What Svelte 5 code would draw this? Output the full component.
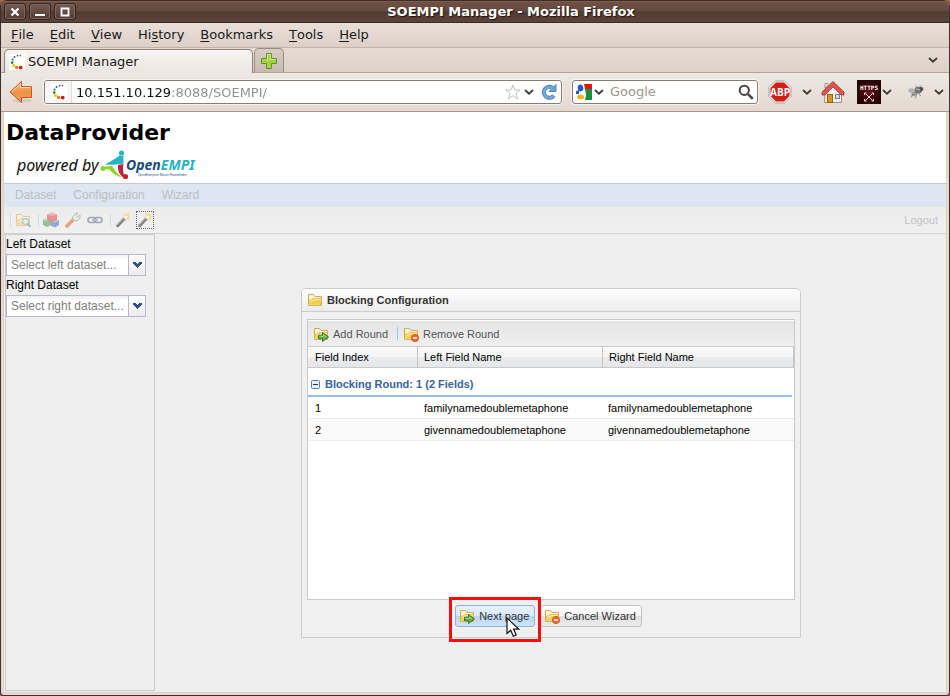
<script>
  const menus = [['', 'F', 'ile'], ['', 'E', 'dit'], ['', 'V', 'iew'], ['Hi', 's', 'tory'], ['', 'B', 'ookmarks'], ['', 'T', 'ools'], ['', 'H', 'elp']];
  const rows = [
    { index: 1, left: 'familynamedoublemetaphone', right: 'familynamedoublemetaphone' },
    { index: 2, left: 'givennamedoublemetaphone', right: 'givennamedoublemetaphone' }
  ];
  let url = $state('10.151.10.129:8088/SOEMPI/');
</script>

{#snippet chevron()}
  <svg class="chevron" width="12" height="8" viewBox="0 0 12 8" aria-hidden="true"><path d="M2 2l4 3.6L10 2" fill="none" stroke="#403c38" stroke-width="1.9" /></svg>
{/snippet}

{#snippet favicon()}
  <svg width="16" height="16" viewBox="0 0 16 16" aria-hidden="true">
    <rect width="16" height="16" fill="#fff" />
    <circle cx="11.5" cy="1.6" r=".8" fill="#8a3c96" /><circle cx="8.6" cy="1.7" r=".9" fill="#5a4a98" /><circle cx="5.5" cy="3" r="1" fill="#3c5a9c" />
    <circle cx="3.6" cy="5.6" r="1.1" fill="#2f7a78" /><circle cx="3.2" cy="8.6" r="1.3" fill="#1c7c30" /><circle cx="4.6" cy="11.4" r="1.5" fill="#f5c400" />
    <circle cx="7.6" cy="13.4" r="1.6" fill="#e07a10" /><circle cx="11.7" cy="13.6" r="1.9" fill="#cc1414" />
  </svg>
{/snippet}

{#snippet folder(kind)}
  <svg width="16" height="16" viewBox="0 0 16 16" aria-hidden="true">
    <path d="M1.500 13.500V2.500h5l1.500 2h6.500v9z" fill="#fdf3c8" stroke="#d9a54e" />
    <path d="M3 4h3M8.500 6h5" stroke="#fff" />
    <path d="M1.500 13.500h12l1-7H6l-1 1.500H2.500z" fill="#f9dc80" stroke="#e0b057" stroke-width=".8" />
    <path d="M3 12.500l.6-3.500h3L7.500 7.500h6l-.8 5z" fill="#f4cf58" />
    <path d="M3.500 9h3l1-1.500h6" fill="none" stroke="#fff3bd" stroke-width=".8" />
    {#if kind === 'add'}
      <path d="M5.500 9.200h4v-2.700l6 4.500-6 4.500v-2.700h-4z" fill="#64ae4b" stroke="#347a2d" />
      <path d="M6.500 10.300h4V9l2.500 2" fill="none" stroke="#b5e39b" stroke-width=".8" />
    {:else if kind === 'remove'}
      <circle cx="12" cy="12" r="3.600" fill="#f16a26" stroke="#c64a14" stroke-width=".8" /><path d="M9.800 12h4.400" stroke="#fff" stroke-width="1.500" />
    {:else if kind === 'search'}
      <circle cx="10.500" cy="9.500" r="3" fill="#d4ecff" stroke="#4c83bd" /><path d="M12.600 11.800l3 3.200" stroke="#3f77b5" stroke-width="1.700" />
    {/if}
  </svg>
{/snippet}

{#snippet wand()}
  <svg width="16" height="16" viewBox="0 0 16 16" aria-hidden="true">
    <path d="M11 0l.8 2.500L14.500 1l-1 2.700 2.500.8-2.500.8 1 2.700-2.700-1-.8 2-.8-2.500-3-.5 2.300-1.500L8 1l2.500 1.500z" fill="#f5c918" />
    <path d="M1.800 14.600L10 6" stroke="#1c1a18" stroke-width="3" /><path d="M1.600 13.500L9.800 5" stroke="#8c8780" stroke-width=".8" />
    <path d="M9.300 6.700L12 4" stroke="#fff" stroke-width="2.600" />
  </svg>
{/snippet}

{#snippet combo(id, label, hint)}
  <div class="field">
    <label for={id}>{label}</label>
    <div class="combo">
      <input {id} type="text" placeholder={hint} />
      <button type="button" aria-label={'Open ' + label}>
        <svg width="9" height="6" viewBox="0 0 9 6" shape-rendering="crispEdges" aria-hidden="true"><path d="M0 0h3v1h1v1h1V1h1V0h3v2H8v1H7v1H6v1H5v1H4V5H3V4H2V3H1V2H0z" fill="#304f8c" /></svg>
      </button>
    </div>
  </div>
{/snippet}

<div class="desktop">
  <div class="window">
    <header class="titlebar">
      <div class="controls">
        <button aria-label="Close"><svg width="10" height="10" viewBox="0 0 10 10"><path d="M1.500 1.500l7 7M8.500 1.500l-7 7" stroke="#fff" stroke-width="2.200" /></svg></button>
        <button aria-label="Minimize"><svg width="10" height="10" viewBox="0 0 10 10"><path d="M0 8h10" stroke="#fff" stroke-width="2" /></svg></button>
        <button aria-label="Maximize"><svg width="10" height="10" viewBox="0 0 10 10"><path d="M1.500 1.500h7v7h-7z" fill="none" stroke="#fff" stroke-width="1.800" /></svg></button>
      </div>
      <span class="caption">SOEMPI Manager - Mozilla Firefox</span>
    </header>

    <nav class="menubar">
      {#each menus as [before, key, after]}
        <button>{before}<u>{key}</u>{after}</button>
      {/each}
    </nav>

    <div class="tabs">
      <button class="tab">{@render favicon()}<span>SOEMPI Manager</span></button>
      <button class="newtab" aria-label="New tab">
        <svg width="18" height="18" viewBox="0 0 18 18"><path d="M6.500 1.500h5v5h5v5h-5v5h-5v-5h-5v-5h5z" fill="#a8cf45" stroke="#5b9424" /><path d="M7.500 9V2.500h3v5h5" fill="none" stroke="#d6eb91" /></svg>
      </button>
      <button class="alltabs" aria-label="List all tabs">{@render chevron()}</button>
    </div>

    <div class="navbar">
      <button class="back" aria-label="Back">
        <svg width="24" height="24" viewBox="0 0 24 24">
          <defs><linearGradient id="arrow" x2="0" y2="1"><stop offset="0" stop-color="#f8c48a" /><stop offset=".5" stop-color="#ec9248" /><stop offset="1" stop-color="#f3a05a" /></linearGradient></defs>
          <ellipse cx="13" cy="20.500" rx="10" ry="2" fill="#cdbfb3" opacity=".6" />
          <path d="M1 12L12.500 1.500V6.500h10v11h-10v5z" fill="url(#arrow)" stroke="#d4541c" stroke-linejoin="round" />
          <path d="M3 11.600L11.500 4v3.500h10" fill="none" stroke="#fbd9b4" />
        </svg>
      </button>
      <div class="box url">
        <span class="identity">{@render favicon()}</span>
        <input type="text" aria-label="Address" bind:value={url} />
        <button aria-label="Bookmark this page"><svg width="16" height="16" viewBox="0 0 16 16"><path d="M8 1l2 5h5.200l-4.200 3.300 1.600 5.500L8 11.600l-4.600 3.200L5 9.300.8 6H6z" fill="#fff" stroke="#c4c2c0" /></svg></button>
        <button aria-label="Show history">{@render chevron()}</button>
        <button class="reload" aria-label="Reload"><svg width="16" height="16" viewBox="0 0 16 16"><path d="M12.800 11.500A5.500 5.500 0 1 1 11.800 4" fill="none" stroke="#4f86bd" stroke-width="4" /><path d="M15 .5v7H8z" fill="#6ba3d8" stroke="#4f86bd" /><path d="M12.500 11.500A5.300 5.300 0 1 1 11.500 4.200" fill="none" stroke="#75abdc" stroke-width="2.200" /></svg></button>
      </div>
      <div class="box search">
        <svg width="16" height="16" viewBox="0 0 16 16" aria-hidden="true">
          <rect width="16" height="16" fill="#fff" /><path d="M8 0h8v5H9z" fill="#e5120e" /><path d="M9 5h7v11H9l1-5z" fill="#139240" /><path d="M0 7l3-1v4H0z" fill="#2858c4" />
          <ellipse cx="4.500" cy="4" rx="2.800" ry="3.500" fill="#2858c4" transform="rotate(-12 4.500 4)" /><path d="M5 7.500c4 1 5 4 3 7" fill="none" stroke="#fff" stroke-width="1.500" /><ellipse cx="4.500" cy="13" rx="3.500" ry="2.500" fill="#f3b51b" />
        </svg>
        <button aria-label="Choose search engine">{@render chevron()}</button>
        <input type="text" aria-label="Search" placeholder="Google" />
        <button aria-label="Search"><svg width="16" height="16" viewBox="0 0 16 16"><circle cx="6.300" cy="6.300" r="4.600" fill="none" stroke="#4a4744" stroke-width="2" /><path d="M9.800 9.800l5 5" stroke="#4a4744" stroke-width="2.600" /></svg></button>
      </div>
      <div class="addons">
        <button aria-label="Adblock Plus">
          <svg width="24" height="24" viewBox="0 0 24 24"><path d="M7.500 1h9L23 7.500v9L16.500 23h-9L1 16.500v-9z" fill="#f5f3f2" stroke="#a9a29e" /><path d="M8 2.500h8L21.500 8v8L16 21.500H8L2.500 16V8z" fill="#d31d17" /><text x="12" y="16" text-anchor="middle" font-family="'Open Sans', sans-serif" font-size="10" font-weight="bold" fill="#fff">ABP</text></svg>
        </button>
        <button class="abpmenu" aria-label="Adblock menu">{@render chevron()}</button>
        <button class="home" aria-label="Home">
          <svg width="24" height="24" viewBox="0 0 24 24"><path d="M4 12L12 5l8.500 7v10.500H3.500z" fill="#f1efec" stroke="#98938d" /><path d="M4 8V3.500h3V6z" fill="#eee" stroke="#99918b" /><path d="M1 12L12 1.500 23 12v3h-3l-8-8-8 8H1z" fill="#d95653" stroke="#a83434" stroke-width=".8" /><rect x="6.500" y="14.500" width="5" height="8" fill="#d99124" stroke="#9a5f12" /><rect x="14.500" y="14.500" width="4" height="4" fill="#cfe0e8" stroke="#73808a" /></svg>
        </button>
        <button aria-label="HTTPS Everywhere">
          <svg width="24" height="24" viewBox="0 0 24 24"><defs><radialGradient id="dark"><stop offset="0" stop-color="#670d10" /><stop offset="1" stop-color="#250406" /></radialGradient></defs><rect width="24" height="24" fill="url(#dark)" /><text x="12" y="10" text-anchor="middle" font-family="'DejaVu Sans Mono', monospace" font-size="6" font-weight="bold" fill="#fff">HTTPS</text><path d="M8.500 13.500l7 7M15.500 13.500l-7 7M7.500 15v-2h2M14.500 13h2v2M7.500 19v2h2M14.500 21h2v-2" fill="none" stroke="#f4dada" /></svg>
        </button>
        <button aria-label="HTTPS menu">{@render chevron()}</button>
        <button class="fly" aria-label="Firebug">
          <svg width="16" height="14" viewBox="0 0 16 14"><ellipse cx="5" cy="6" rx="4.800" ry="2.400" fill="#b4b3b1" transform="rotate(12 5 6)" /><ellipse cx="7" cy="8.500" rx="4" ry="1.900" fill="#989795" transform="rotate(-30 7 8.500)" /><ellipse cx="10.500" cy="5" rx="3.800" ry="3.300" fill="#737271" /><circle cx="13.500" cy="4" r="1.900" fill="#4f4e4e" /><path d="M5 9l-2 3.500M8.500 9l-1 4.500M11 8l1.500 3M9 2L7.500.5M12 2l1-1.500" stroke="#7b7a79" stroke-width=".8" /><path d="M8 4l4 1" stroke="#c6c5c3" /></svg>
        </button>
        <button class="last" aria-label="Firebug menu">{@render chevron()}</button>
      </div>
    </div>

    <main>
      <section class="banner">
        <h1>DataProvider</h1>
        <div class="brand">
          <span>powered by</span>
          <svg width="98" height="30" viewBox="0 0 98 30" role="img" aria-label="OpenEMPI">
            <circle cx="21.500" cy="3" r="2.600" fill="#28b4c4" /><path d="M5 14.500Q15 9 19.500 5.500q2 .5 4 .5v7.500Q14 15.500 5 14.500z" fill="#28b4c4" />
            <circle cx="3" cy="18.500" r="2.500" fill="#8fd424" /><path d="M5 16.500l7-.5q4 7 10 11.500-9-2.500-12.500-8l-4.500-.5z" fill="#8fd424" />
            <circle cx="25.500" cy="26.500" r="2.600" fill="#c51f3c" /><path d="M18 15l5.500-1q-1.500 6 1 12l-2 1q-5.500-5-4.500-12z" fill="#c51f3c" />
            <text x="26" y="20" font-family="'Noto Sans', sans-serif" font-size="14" font-weight="bold" font-style="italic"><tspan fill="#164a7a">Open</tspan><tspan fill="#25b3c4">EMPI</tspan></text>
            <text x="38" y="26" font-family="'Liberation Sans', sans-serif" font-size="3" fill="#164a7a">OpenEnterprise Master PatientIndex</text>
          </svg>
        </div>
      </section>
      <nav class="appmenu"><button disabled>Dataset</button><button disabled>Configuration</button><button disabled>Wizard</button></nav>
      <div class="toolbar">
        <i class="sep"></i>
        <button disabled aria-label="Browse">{@render folder('search')}</button>
        <i class="sep"></i>
        <button disabled aria-label="Blocks"><svg width="16" height="16" viewBox="0 0 16 16"><path d="M0 8l4-1.500L8 8v5l-4 2-4-2z" fill="#3c8f46" /><path d="M0 8l4-1.500L8 8l-4 1.500z" fill="#92cb91" /><path d="M8 9l4-2 4 1.500V13l-4 2.500L8 14z" fill="#3568b8" /><path d="M8 9l4-2 4 1.500-4 2z" fill="#94b4e2" /><path d="M4 2.500L9 .5l5 2v6l-5 2-5-2z" fill="#d43c38" /><path d="M4 2.500L9 4l5-1.500L9 .5z" fill="#f08780" /></svg></button>
        <button disabled aria-label="Settings"><svg width="16" height="16" viewBox="0 0 16 16"><path d="M2 14L8.500 7.500" stroke="#dd5a20" stroke-width="3.600" stroke-linecap="round" /><path d="M8 8L7.500 4.500 11 1l2 .2L11 3.500l1.500 1.500L15 3v3l-3 3-2.500-.3z" fill="#e4e4e2" stroke="#77736f" stroke-width=".8" /></svg></button>
        <button disabled aria-label="Link"><svg width="16" height="16" viewBox="0 0 16 16"><rect x="1" y="5.500" width="8" height="5" rx="2.500" fill="none" stroke="#53627c" stroke-width="1.600" /><rect x="7" y="5.500" width="8" height="5" rx="2.500" fill="none" stroke="#53627c" stroke-width="1.600" /><path d="M5 8h6" stroke="#8591a8" stroke-width="1.500" /></svg></button>
        <i class="sep"></i>
        <button disabled aria-label="Wizard">{@render wand()}</button>
        <button disabled class="framed" aria-label="Run wizard">{@render wand()}</button>
        <button disabled class="logout">Logout</button>
      </div>
      <div class="body">
        <aside>
          {@render combo('left', 'Left Dataset', 'Select left dataset...')}
          {@render combo('right', 'Right Dataset', 'Select right dataset...')}
        </aside>
        <div class="stage">
          <section class="dialog" role="dialog" aria-labelledby="dialog-title">
            <h2 id="dialog-title">{@render folder('')}<span>Blocking Configuration</span></h2>
            <div class="grid">
              <div class="gridbar">
                <button>{@render folder('add')}Add Round</button>
                <i class="sep"></i>
                <button>{@render folder('remove')}Remove Round</button>
              </div>
              <table>
                <colgroup><col class="c1" /><col class="c2" /><col /></colgroup>
                <thead><tr><th>Field Index</th><th>Left Field Name</th><th>Right Field Name</th></tr></thead>
                <tbody>
                  <tr class="group"><td colspan="3"><div>
                    <svg width="9" height="9" viewBox="0 0 9 9" aria-hidden="true"><rect x=".5" y=".5" width="8" height="8" rx="1" fill="#e8eef6" stroke="#5c7ea8" /><path d="M2 4.500h5" stroke="#1f3658" /></svg>
                    Blocking Round: 1 (2 Fields)</div></td></tr>
                  {#each rows as row}
                    <tr class="row"><td>{row.index}</td><td>{row.left}</td><td>{row.right}</td></tr>
                  {/each}
                </tbody>
              </table>
            </div>
            <footer>
              <div class="marked">
                <button class="push hover">{@render folder('add')}Next page</button>
                <svg class="cursor" width="14" height="21" viewBox="0 0 14 21" aria-hidden="true"><path d="M1 1v15.500l3.700-3.300 2.600 6 2.900-1.200-2.600-5.900h5z" fill="#fff" stroke="#111" stroke-width="1.200" /></svg>
              </div>
              <button class="push">{@render folder('remove')}Cancel Wizard</button>
            </footer>
          </section>
        </div>
      </div>
    </main>
  </div>
</div>

<style>
  :global(body) { margin: 0; }
  * { box-sizing: border-box; }
  svg { display: block; flex: none; }
  button { display: flex; align-items: center; margin: 0; padding: 0; border: 0; background: none; color: inherit; font: inherit; white-space: nowrap; flex: none; }
  input { min-width: 0; margin: 0; padding: 0; border: 0; outline: 0; background: none; font: inherit; }

  .desktop { min-height: 100vh; display: flex; background: #b0613c; }
  .window { flex: 1; min-width: 0; display: flex; flex-direction: column; border: 1px solid #3b302c; border-top: 0; border-radius: 6px 6px 4px 4px; overflow: hidden; background: #e5dbd2; font: 13px/18px "DejaVu Sans", sans-serif; color: #1a1a1a; }

  .titlebar { display: flex; align-items: center; height: 23px; padding: 0 3px; border-top: 1px solid #3b2c27; border-bottom: 1px solid #3a2a24; background: linear-gradient(#90665a 0, #6f5045 1px, #65493e 10px, #513c33 11px, #5b443a 100%); }
  .controls { display: flex; gap: 3px; }
  .controls button { width: 22px; height: 17px; justify-content: center; border: 1px solid #2f2520; border-radius: 3px; background: linear-gradient(#775b50, #503c34); box-shadow: inset 0 0 0 1px #80695f; }
  .caption { flex: 1; text-align: center; line-height: 20px; font-weight: bold; color: #fff; text-shadow: 1px 1px 1px #1e1410; }

  .menubar { display: flex; align-items: center; gap: 16px; height: 25px; padding: 0 10px; border-bottom: 1px solid #c5b3a5; background: linear-gradient(#e8dfd7, #ddd1c7); }
  u { text-decoration-thickness: 1px; text-underline-offset: 2px; }

  .tabs { display: flex; align-items: flex-end; gap: 1px; height: 25px; padding: 0 10px 0 3px; border-bottom: 1px solid #b5a496; background: linear-gradient(#e6dcd4, #ddd1c8); }
  .tab { width: 249px; height: 24px; margin-bottom: -1px; padding: 0 4px; gap: 3px; border: 1px solid #8d8178; border-bottom: 0; border-radius: 5px 5px 0 0; background: linear-gradient(#f7f4f1, #ece6e1); }
  .newtab { width: 30px; height: 24px; justify-content: center; border: 1px solid #998c82; border-bottom: 0; border-radius: 5px 5px 0 0; background: linear-gradient(#d7cdc5, #c6bbb2); }
  .alltabs { margin-left: auto; height: 24px; }

  .navbar { display: flex; align-items: center; height: 39px; padding: 0 0 0 8px; border-bottom: 1px solid #a8978b; background: linear-gradient(#ede8e3, #e3d9d1); }
  .back { margin-right: 11px; }
  .box { display: flex; align-items: center; height: 24px; border: 1px solid #8c7a6d; border-radius: 3px; background: #fff; box-shadow: 0 0 0 1px #f6f3f0; overflow: hidden; }
  .url { flex: 1; padding-right: 4px; gap: 2px; }
  .url input { flex: 1; height: 22px; background: linear-gradient(90deg, #101010 95px, #8c8c8c 95px); background-clip: text; -webkit-text-fill-color: transparent; color: #555; }
  .identity { display: flex; align-items: center; width: 27px; height: 22px; margin-right: 2px; padding-left: 6px; border-right: 1px solid #ddd; background: #f7f7f7; }
  .reload { margin-left: 4px; }
  .search { width: 186px; margin: 0 10px; padding: 0 3px; }
  .search input { flex: 1; margin-left: 5px; }
  .search input::placeholder { color: #a1948a; opacity: 1; }
  .search button { padding-left: 1px; }
  .addons { display: flex; align-items: center; }
  .addons .home { margin: 0 12px 0 8px; }
  .addons .abpmenu { margin-left: 9px; }
  .addons .fly { margin: 0 9px 0 15px; }
  .addons .last { margin-right: 4px; }

  main { flex: 1; display: flex; flex-direction: column; margin: 0 2px 2px; border: solid #e0cfc3; border-width: 0 1px 1px; background: #efefef; font: 11px/14px "Liberation Sans", Arial, sans-serif; color: #000; }
  .banner { height: 72px; padding: 9px 2px 0; border-bottom: 1px solid #c8c8c8; background: #fff; }
  h1 { margin: 0; font: bold 22px/24px "DejaVu Sans", sans-serif; }
  .brand { display: flex; align-items: center; height: 36px; padding: 3px 0 0 11px; gap: 2px; font: italic 16px/20px "Noto Sans", sans-serif; color: #111; }
  .appmenu { display: flex; align-items: center; gap: 17px; height: 23px; padding: 0 11px 1px; background: linear-gradient(#dfe6ef, #dce5f2); font-size: 12px; color: #bcbfc4; }
  .toolbar { display: flex; align-items: center; height: 27px; padding: 0 8px 0 5px; gap: 6px; border-bottom: 1px solid #d4d4d4; background: linear-gradient(#ececec, #f0f0f0); color: #c3c3c3; }
  .toolbar svg { opacity: .5; }
  .sep { width: 1px; height: 13px; flex: none; background: #cbdcf0; }
  .toolbar .sep { margin: 0 -2px 0 1px; }
  .toolbar .framed { outline: 1px dotted #666; }
  .logout { margin-left: auto; }

  .body { flex: 1; display: flex; padding: 0 0 1px 1px; }
  aside { width: 150px; border: 1px solid #c9c9c9; font-size: 12px; }
  .field label { display: block; height: 19px; line-height: 18px; }
  .combo { display: flex; width: 140px; height: 22px; border: 1px solid #b5b8c8; background: linear-gradient(#f0f0f0, #fff 5px); }
  .combo input { flex: 1; padding-left: 4px; }
  .combo input::placeholder { color: #808080; opacity: 1; }
  .combo button { width: 17px; justify-content: center; border-left: 1px solid #b5b8c8; background: linear-gradient(#fff, #ececec); }

  .stage { flex: 1; display: flex; align-items: center; justify-content: center; padding-left: 1px; }
  .dialog { width: 500px; padding: 0 5px; border: 1px solid #ccc; border-radius: 5px 5px 0 0; background: #f0f0f0; }
  h2 { display: flex; align-items: center; height: 23px; margin: 0 -5px 7px; padding: 0 5px; gap: 4px; border-bottom: 1px solid #ccc; border-radius: 4px 4px 0 0; background: linear-gradient(#fff, #ebebeb); font-size: 11px; line-height: 14px; color: #333; }
  .grid { min-height: 281px; border: 1px solid #c9c9c9; background: #fff; }
  .gridbar { display: flex; align-items: center; height: 27px; padding: 2px 5px 0; gap: 7px; border-bottom: 1px solid #ccc; background: linear-gradient(#fff 0, #fff 1px, #e4e4e4 1px, #efefef); color: #555; }
  .gridbar button { gap: 4px; }
  .gridbar .sep { background: #98c8ff; margin: 0 -2px 0 2px; }
  table { width: 100%; table-layout: fixed; border-collapse: separate; border-spacing: 0; }
  .c1 { width: 110px; }
  .c2 { width: 185px; }
  th { height: 21px; padding: 0 6px; border-right: 1px solid #c5c5c5; border-bottom: 1px solid #c9c9c9; text-align: left; font-weight: normal; background: linear-gradient(#f9f9f9, #f4f4f5 50%, #eaebed 50%, #e6e7e9); }
  th:first-child { padding-left: 7px; }
  td { padding: 0 6px; }
  .group td { height: 29px; padding: 0; }
  .group div { display: flex; align-items: center; height: 29px; gap: 5px; margin-right: 2px; padding: 6px 3px 0; border-bottom: 2px solid #99bbe8; font-weight: bold; color: #3764a0; }
  .row td { height: 22px; padding-top: 1px; border-bottom: 1px solid #ededed; }
  .row td:first-child { padding-left: 7px; }
  .row td:last-child { padding-left: 5px; }
  .row:last-child td { background: #fafafa; }
  footer { display: flex; justify-content: center; gap: 5px; height: 37px; padding: 5px 5px 0 0; }
  .push { height: 22px; padding: 1px 5px 0 3px; gap: 4px; border: 1px solid #c2c2c2; border-radius: 3px; background: linear-gradient(#fff, #f3f3f3 50%, #dedede 50%, #ececec); color: #333; }
  .push.hover { border-color: #8fb4da; background: linear-gradient(#e6f1fd, #d8e8fa 50%, #bad5f2 50%, #cfe3fa); }
  .marked { position: relative; height: 22px; }
  .marked::after { content: ""; position: absolute; inset: -8px -6px -15px; border: 3px solid #f60d0d; }
  .cursor { position: absolute; left: 51px; top: 12px; z-index: 1; }
</style>
